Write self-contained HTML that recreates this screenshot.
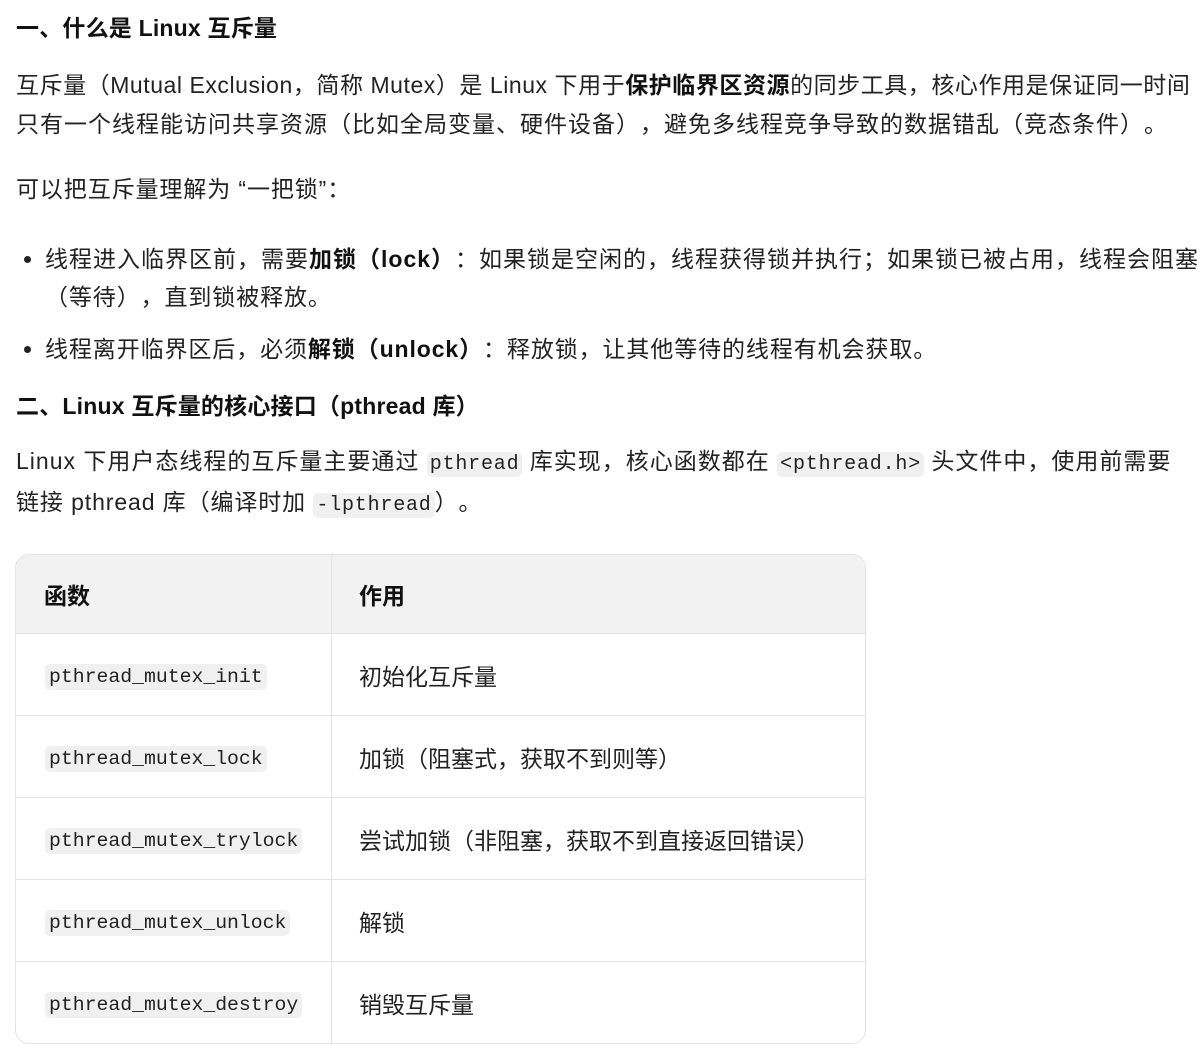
<!DOCTYPE html>
<html><head><meta charset="utf-8"><style>
html,body{margin:0;padding:0;background:#fff;width:1204px;height:1045px;overflow:hidden;position:relative}
body{font-family:"Liberation Sans","Noto Sans CJK SC",sans-serif;color:#222;font-size:23px;text-spacing-trim:space-all}
.l{position:absolute;white-space:nowrap;line-height:30px;height:30px;letter-spacing:0.9px}
.h{font-weight:bold;font-size:23px;color:#111;letter-spacing:0.2px}
b{font-weight:bold;color:#111}
code{font-family:"Liberation Mono",monospace;background:#f0f0f0;border-radius:5px;padding:1px 3px;font-size:20px;letter-spacing:0.8px}
.dot{position:absolute;width:7px;height:7px;border-radius:50%;background:#222}
table{position:absolute;left:15px;top:554px;width:851px;border-collapse:separate;border-spacing:0;border:1px solid #e3e3e3;border-radius:14px;overflow:hidden}
td,th{border-bottom:1px solid #e3e3e3;padding:0 0 0 27px;text-align:left;height:81px;font-size:23px;vertical-align:middle}
th{background:#f2f2f2;height:78px;font-weight:bold;color:#111}
td:first-child,th:first-child{width:286px;border-right:1px solid #e3e3e3;padding-left:28px}
tr:last-child td{border-bottom:none}
td code{font-size:19.8px;letter-spacing:0;padding:2px 4px}
</style></head><body>
<div class="l h" style="left:16px;top:13px">一、什么是 Linux 互斥量</div>
<div class="l" style="left:16px;top:70px;letter-spacing:0.55px">互斥量（Mutual Exclusion，简称 Mutex）是 Linux 下用于<b>保护临界区资源</b>的同步工具，核心作用是保证同一时间</div>
<div class="l" style="left:16px;top:109px;letter-spacing:1px">只有一个线程能访问共享资源（比如全局变量、硬件设备），避免多线程竞争导致的数据错乱（竞态条件）。</div>
<div class="l" style="left:16px;top:174px">可以把互斥量理解为 “一把锁”：</div>
<div class="dot" style="left:24px;top:256px"></div>
<div class="l" style="left:45px;top:244px;letter-spacing:1px">线程进入临界区前，需要<b>加锁（lock）</b>：如果锁是空闲的，线程获得锁并执行；如果锁已被占用，线程会阻塞</div>
<div class="l" style="left:45px;top:282px">（等待），直到锁被释放。</div>
<div class="dot" style="left:24px;top:346px"></div>
<div class="l" style="left:45px;top:334px">线程离开临界区后，必须<b>解锁（unlock）</b>：释放锁，让其他等待的线程有机会获取。</div>
<div class="l h" style="left:16px;top:391px">二、Linux 互斥量的核心接口（pthread 库）</div>
<div class="l" style="left:16px;top:446px;letter-spacing:1px">Linux 下用户态线程的互斥量主要通过 <code>pthread</code> 库实现，核心函数都在 <code>&lt;pthread.h&gt;</code> 头文件中，使用前需要</div>
<div class="l" style="left:16px;top:487px">链接 pthread 库（编译时加 <code>-lpthread</code>）。</div>
<table>
<tr><th>函数</th><th>作用</th></tr>
<tr><td style="padding-left:29px"><code>pthread_mutex_init</code></td><td>初始化互斥量</td></tr>
<tr><td style="padding-left:29px"><code>pthread_mutex_lock</code></td><td>加锁（阻塞式，获取不到则等）</td></tr>
<tr><td style="padding-left:29px"><code>pthread_mutex_trylock</code></td><td>尝试加锁（非阻塞，获取不到直接返回错误）</td></tr>
<tr><td style="padding-left:29px"><code>pthread_mutex_unlock</code></td><td>解锁</td></tr>
<tr><td style="padding-left:29px"><code>pthread_mutex_destroy</code></td><td>销毁互斥量</td></tr>
</table>
</body></html>
